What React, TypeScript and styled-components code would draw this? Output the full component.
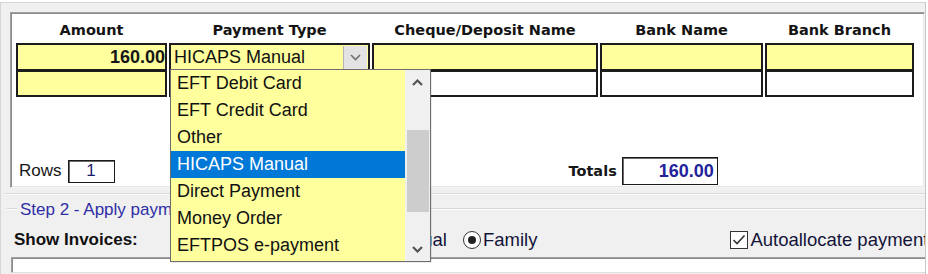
import React from "react";
import styled, { createGlobalStyle } from "styled-components";

const GlobalStyle = createGlobalStyle`
  html, body { margin: 0; padding: 0; background: #ffffff; }
  * { box-sizing: border-box; }
`;

const YELLOW = "#ffff9e";
const HEAD_FONT = `"DejaVu Sans", Tahoma, sans-serif`;
const UI_FONT = `"Liberation Sans", Arial, sans-serif`;
const COLS = "151px 201px 226px 163px 149px";

const Screen = styled.div`
  position: relative;
  width: 928px;
  height: 274px;
  overflow: hidden;
  background: #ffffff;
  font-family: ${UI_FONT};
`;

const Window = styled.div`
  width: 926px;
  height: 272px;
  margin-top: 2px;
  border-top: 1px solid #d6d6d6;
  border-left: 1px solid #d6d6d6;
  border-right: 1px solid #c6c6c6;
  background: #f0f0f0;
  padding: 9px 0 0 9px;
  display: flex;
  flex-direction: column;
  overflow: hidden;
`;

const Panel = styled.div`
  height: 176px;
  flex-shrink: 0;
  background: #ffffff;
  border: 1px solid;
  border-color: #a0a0a0 #f4f4f4 #f4f4f4 #a0a0a0;
  box-shadow: inset 1px 1px 0 #8c8c8c, inset -1px -1px 0 #e6e6e6;
  padding: 1px 8px 2px 5px;
  display: flex;
  flex-direction: column;
`;

const HeaderRow = styled.div`
  display: grid;
  grid-template-columns: ${COLS};
  column-gap: 2px;
  height: 29px;
  padding-top: 8px;
`;

const HeaderCell = styled.div`
  font-family: ${HEAD_FONT};
  font-weight: bold;
  font-size: 14.5px;
  line-height: 17px;
  color: #141414;
  text-align: center;
  white-space: nowrap;
`;

const DataRow = styled.div<{ $first?: boolean }>`
  display: grid;
  grid-template-columns: ${COLS};
  column-gap: 2px;
  height: ${(p) => (p.$first ? 28 : 27)}px;
  margin-top: ${(p) => (p.$first ? 0 : -1)}px;
`;

const Cell = styled.div<{ $bg: string; $right?: boolean }>`
  background: ${(p) => p.$bg};
  border: 2px solid #1c1c1c;
  display: flex;
  align-items: center;
  justify-content: ${(p) => (p.$right ? "flex-end" : "flex-start")};
  padding: 0 0 0 3px;
  font-size: 18px;
  color: #111;
  white-space: nowrap;
  overflow: hidden;
`;

const ValueText = styled.span`
  font-weight: bold;
  font-size: 18px;
  color: #161616;
`;

const ComboCell = styled(Cell)`
  padding-right: 1px;
  justify-content: space-between;
`;

const ComboButton = styled.div`
  width: 24px;
  height: 23px;
  background: #e3e3e3;
  border-left: 1px solid #b4b4b4;
  display: flex;
  align-items: center;
  justify-content: center;
`;

const Footer = styled.div`
  margin-top: auto;
  height: 28px;
  display: flex;
  align-items: center;
  padding-left: 3px;
`;

const FooterLabel = styled.span<{ $bold?: boolean }>`
  font-family: ${(p) => (p.$bold ? HEAD_FONT : UI_FONT)};
  font-weight: ${(p) => (p.$bold ? "bold" : "normal")};
  font-size: ${(p) => (p.$bold ? "14.5px" : "17px")};
  color: #161616;
`;

const RowsBox = styled.div`
  margin-left: 6px;
  width: 47px;
  height: 23px;
  border: 1px solid #1a1a1a;
  box-shadow: inset 1px 1px 0 #6a6a6a;
  display: flex;
  align-items: center;
  justify-content: center;
  font-size: 17px;
  color: #1c1c6e;
`;

const TotalsGroup = styled.div`
  margin-left: 454px;
  display: flex;
  align-items: center;
  gap: 5px;
`;

const TotalsBox = styled.div`
  width: 96px;
  height: 28px;
  border: 1px solid #1a1a1a;
  box-shadow: inset 1px 1px 0 #6a6a6a;
  display: flex;
  align-items: center;
  justify-content: flex-end;
  padding-right: 3px;
  font-weight: bold;
  font-size: 18px;
  color: #23239b;
`;

const Divider = styled.div`
  margin: 5px 0 0 -5px;
  height: 2px;
  border-top: 1px solid #dadada;
  border-bottom: 1px solid #fbfbfb;
  flex-shrink: 0;
`;

const LegendRow = styled.div`
  margin: 5px 0 0 -3px;
  height: 20px;
  display: flex;
  align-items: flex-start;
  flex-shrink: 0;
`;

const LegendLine = styled.div<{ $grow?: boolean }>`
  margin-top: 8px;
  width: 10px;
  flex: ${(p) => (p.$grow ? 1 : "none")};
  height: 2px;
  border-top: 1px solid #d5d5d5;
  border-bottom: 1px solid #ffffff;
`;

const LegendText = styled.span`
  margin: 0 3px;
  font-size: 17px;
  line-height: 20px;
  color: #2e2ea6;
  white-space: nowrap;
`;

const ShowRow = styled.div`
  margin: 11px 0 0 4px;
  height: 18px;
  display: flex;
  align-items: center;
  flex-shrink: 0;
  white-space: nowrap;
`;

const ShowLabel = styled.span`
  font-weight: bold;
  font-size: 17px;
  color: #111;
`;

const Option = styled.label<{ $gap: number }>`
  margin-left: ${(p) => p.$gap}px;
  display: flex;
  align-items: center;
  gap: 2px;
  font-size: 18.5px;
  color: #14143a;
  flex-shrink: 0;
`;

const Radio = styled.span<{ $on?: boolean }>`
  width: 18px;
  height: 18px;
  border-radius: 50%;
  border: 1.5px solid #333;
  background: #fff;
  display: flex;
  align-items: center;
  justify-content: center;
  &::after {
    content: "";
    width: 8px;
    height: 8px;
    border-radius: 50%;
    background: ${(p) => (p.$on ? "#222" : "transparent")};
  }
`;

const Check = styled.span`
  width: 18px;
  height: 18px;
  border: 1.5px solid #333;
  background: #fff;
  display: flex;
  align-items: center;
  justify-content: center;
`;

const BottomFrame = styled.div`
  margin: 8px 0 0 1px;
  height: 16px;
  flex-shrink: 0;
  background: #ffffff;
  border-top: 1px solid #a0a0a0;
  border-left: 1px solid #a0a0a0;
  border-bottom: 1px solid #dedede;
  box-shadow: inset 1px 1px 0 #8a8a8a;
`;

/* Drop-down list overlay */
const DropList = styled.div`
  position: absolute;
  left: 170px;
  top: 69px;
  width: 261px;
  height: 193px;
  border: 1px solid #6e6e6e;
  background: ${YELLOW};
  display: flex;
  box-shadow: 1px 1px 0 rgba(0, 0, 0, 0.08);
`;

const Items = styled.div`
  flex: 1;
  display: flex;
  flex-direction: column;
`;

const Item = styled.div<{ $sel?: boolean }>`
  height: 27px;
  line-height: 27px;
  padding-left: 6px;
  font-size: 18px;
  white-space: nowrap;
  color: ${(p) => (p.$sel ? "#ffffff" : "#111111")};
  background: ${(p) => (p.$sel ? "#0078d7" : "transparent")};
`;

const ScrollBar = styled.div`
  width: 25px;
  background: #f0f0f0;
  display: flex;
  flex-direction: column;
`;

const ScrollArrow = styled.div`
  height: 24px;
  display: flex;
  align-items: center;
  justify-content: center;
  flex-shrink: 0;
`;

const Track = styled.div`
  flex: 1;
  padding: 36px 1px 0 2px;
`;

const Thumb = styled.div`
  height: 82px;
  background: #cdcdcd;
`;

const Chevron = ({ up, color = "#555555", weight = 2.2 }: { up?: boolean; color?: string; weight?: number }) => (
  <svg width="11" height="7" viewBox="0 0 11 7">
    <polyline
      points={up ? "1,6 5.5,1.5 10,6" : "1,1 5.5,5.5 10,1"}
      fill="none"
      stroke={color}
      strokeWidth={weight}
    />
  </svg>
);

const items = [
  "EFT Debit Card",
  "EFT Credit Card",
  "Other",
  "HICAPS Manual",
  "Direct Payment",
  "Money Order",
  "EFTPOS e-payment",
];

export default function App() {
  return (
    <>
      <GlobalStyle />
      <Screen>
        <Window>
          <Panel>
            <HeaderRow>
              <HeaderCell>Amount</HeaderCell>
              <HeaderCell>Payment Type</HeaderCell>
              <HeaderCell>Cheque/Deposit Name</HeaderCell>
              <HeaderCell>Bank Name</HeaderCell>
              <HeaderCell>Bank Branch</HeaderCell>
            </HeaderRow>
            <DataRow $first>
              <Cell $bg={YELLOW} $right>
                <ValueText>160.00</ValueText>
              </Cell>
              <ComboCell $bg={YELLOW}>
                <span>HICAPS Manual</span>
                <ComboButton>
                  <Chevron color="#707070" weight={1.6} />
                </ComboButton>
              </ComboCell>
              <Cell $bg={YELLOW} />
              <Cell $bg={YELLOW} />
              <Cell $bg={YELLOW} />
            </DataRow>
            <DataRow>
              <Cell $bg={YELLOW} />
              <Cell $bg={YELLOW} />
              <Cell $bg="#ffffff" />
              <Cell $bg="#ffffff" />
              <Cell $bg="#ffffff" />
            </DataRow>
            <Footer>
              <FooterLabel>Rows</FooterLabel>
              <RowsBox>1</RowsBox>
              <TotalsGroup>
                <FooterLabel $bold>Totals</FooterLabel>
                <TotalsBox>160.00</TotalsBox>
              </TotalsGroup>
            </Footer>
          </Panel>
          <Divider />
          <LegendRow>
            <LegendLine />
            <LegendText>Step 2 - Apply payment</LegendText>
            <LegendLine $grow />
          </LegendRow>
          <ShowRow>
            <ShowLabel>Show Invoices:</ShowLabel>
            <Option $gap={211}>
              <Radio />
              Individual
            </Option>
            <Option $gap={16}>
              <Radio $on />
              Family
            </Option>
            <Option $gap={193}>
              <Check>
                <svg width="14" height="12" viewBox="0 0 14 12">
                  <polyline points="1.5,6 5,9.5 12.5,1.5" fill="none" stroke="#333" strokeWidth="1.6" />
                </svg>
              </Check>
              Autoallocate payment
            </Option>
          </ShowRow>
          <BottomFrame />
        </Window>
        <DropList>
          <Items>
            {items.map((t) => (
              <Item key={t} $sel={t === "HICAPS Manual"}>
                {t}
              </Item>
            ))}
          </Items>
          <ScrollBar>
            <ScrollArrow>
              <Chevron up />
            </ScrollArrow>
            <Track>
              <Thumb />
            </Track>
            <ScrollArrow>
              <Chevron />
            </ScrollArrow>
          </ScrollBar>
        </DropList>
      </Screen>
    </>
  );
}
